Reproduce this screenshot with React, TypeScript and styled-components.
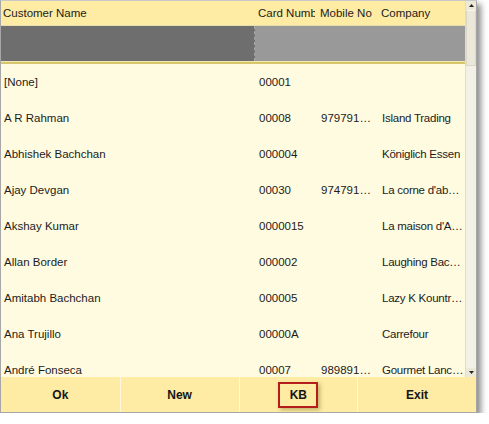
import React from "react";
import styled, { createGlobalStyle } from "styled-components";

const GlobalStyle = createGlobalStyle`
  html, body {
    margin: 0;
    padding: 0;
    background: #ffffff;
  }
  body {
    font-family: "Liberation Sans", Arial, sans-serif;
  }
`;

const Window = styled.div`
  width: 477px;
  height: 413px;
  border: 1px solid #a7a7a7;
  border-top-color: #c8c8c8;
  box-shadow: 4px 4px 6px rgba(0, 0, 0, 0.45);
  display: flex;
  flex-direction: column;
  box-sizing: border-box;
  overflow: hidden;
  font-family: "Liberation Sans", Arial, sans-serif;
  font-size: 11.5px;
  color: #1c1c1c;
  background: #fffbe0;
`;

const Main = styled.div`
  flex: 1;
  display: flex;
  min-height: 0;
`;

const Grid = styled.div`
  flex: 1;
  display: flex;
  flex-direction: column;
  min-width: 0;
  overflow: hidden;
`;

const COLS = "255px 62px 61px 1fr";

const HeaderRow = styled.div`
  display: grid;
  grid-template-columns: ${COLS};
  height: 24px;
  background: #feeba4;
  align-items: center;
  flex-shrink: 0;
  border-bottom: 1px solid #e6dcb0;
`;

const HeaderCell = styled.div`
  padding-left: 2px;
  margin-right: 3px;
  white-space: nowrap;
  overflow: hidden;
`;

const FilterRow = styled.div`
  display: grid;
  grid-template-columns: 254px 1fr;
  height: 35px;
  flex-shrink: 0;
`;

const FilterCell = styled.div<{ $dark?: boolean }>`
  background: ${(p) => (p.$dark ? "#6e6e6e" : "#999999")};
  border-right: ${(p) => (p.$dark ? "1px dashed #a8a8a8" : "none")};
`;

const Divider = styled.div`
  height: 2px;
  flex-shrink: 0;
  background: #d7c56a;
  border-top: 1px solid #f1e7b4;
`;

const Rows = styled.div`
  flex: 1;
  overflow: hidden;
`;

const Row = styled.div`
  display: grid;
  grid-template-columns: ${COLS};
  height: 36px;
  align-items: center;
`;

const Cell = styled.div<{ $tight?: boolean; $narrow?: boolean }>`
  padding-left: 3px;
  padding-right: ${(p) => (p.$tight ? "6px" : "0")};
  letter-spacing: ${(p) => (p.$narrow ? "-0.25px" : "normal")};
  white-space: nowrap;
  overflow: hidden;
  text-overflow: ellipsis;
`;

const Scrollbar = styled.div`
  width: 10px;
  flex-shrink: 0;
  background: #f1efe3;
  border-left: 1px solid #e0ddcc;
  display: flex;
  flex-direction: column;
`;

const ArrowButton = styled.div`
  height: 9px;
  display: flex;
  align-items: center;
  justify-content: center;
  background: #ece9d8;
  flex-shrink: 0;
`;

const Thumb = styled.div`
  height: 56px;
  background: #ebe8d9;
  border: 1px solid #d9d6c6;
  border-top-color: #f8f7f0;
  box-sizing: border-box;
  flex-shrink: 0;
`;

const Track = styled.div`
  flex: 1;
  background: #f3f1e7;
`;

const ButtonBar = styled.div`
  height: 35px;
  display: grid;
  grid-template-columns: repeat(4, 1fr);
  flex-shrink: 0;
  background: #feeba4;
`;

const BarButton = styled.div`
  display: flex;
  align-items: center;
  justify-content: center;
  font-weight: bold;
  font-size: 12px;
  color: #151515;
  border-left: 1px solid #fff8dc;
  &:first-child {
    border-left: none;
  }
`;

const Highlight = styled.span`
  display: inline-flex;
  align-items: center;
  justify-content: center;
  width: 40px;
  height: 26px;
  box-sizing: border-box;
  border: 2px solid #b51d1d;
  box-shadow: 2px 2px 4px rgba(120, 110, 40, 0.45);
`;

type Customer = { name: string; card: string; mobile?: string; company?: string };

const customers: Customer[] = [
  { name: "[None]", card: "00001" },
  { name: "A R Rahman", card: "00008", mobile: "9797912345", company: "Island Trading" },
  { name: "Abhishek Bachchan", card: "000004", company: "Königlich Essen" },
  { name: "Ajay Devgan", card: "00030", mobile: "9747912345", company: "La corne d'abondance" },
  { name: "Akshay Kumar", card: "0000015", company: "La maison d'Asie" },
  { name: "Allan Border", card: "000002", company: "Laughing  Bacchus Wine Cellars" },
  { name: "Amitabh Bachchan", card: "000005", company: "Lazy K  Kountry Store" },
  { name: "Ana Trujillo", card: "00000A", company: "Carrefour" },
  { name: "André Fonseca", card: "00007", mobile: "9898912345", company: "Gourmet  Lanchonetes" },
];

const UpArrow = () => (
  <svg width="5" height="3" viewBox="0 0 5 3">
    <path d="M0 3 L2.5 0 L5 3 Z" fill="#222" />
  </svg>
);

const DownArrow = () => (
  <svg width="5" height="3" viewBox="0 0 5 3">
    <path d="M0 0 L2.5 3 L5 0 Z" fill="#222" />
  </svg>
);

export default function App() {
  return (
    <>
      <GlobalStyle />
      <Window>
        <Main>
          <Grid>
            <HeaderRow>
              <HeaderCell>Customer Name</HeaderCell>
              <HeaderCell>Card Number</HeaderCell>
              <HeaderCell>Mobile No</HeaderCell>
              <HeaderCell>Company</HeaderCell>
            </HeaderRow>
            <FilterRow>
              <FilterCell $dark />
              <FilterCell />
            </FilterRow>
            <Divider />
            <Rows>
              {customers.map((c) => (
                <Row key={c.name}>
                  <Cell>{c.name}</Cell>
                  <Cell>{c.card}</Cell>
                  <Cell $tight>{c.mobile ?? ""}</Cell>
                  <Cell $narrow>{c.company ?? ""}</Cell>
                </Row>
              ))}
            </Rows>
          </Grid>
          <Scrollbar>
            <ArrowButton>
              <UpArrow />
            </ArrowButton>
            <Thumb />
            <Track />
            <ArrowButton>
              <DownArrow />
            </ArrowButton>
          </Scrollbar>
        </Main>
        <ButtonBar>
          <BarButton>Ok</BarButton>
          <BarButton>New</BarButton>
          <BarButton>
            <Highlight>KB</Highlight>
          </BarButton>
          <BarButton>Exit</BarButton>
        </ButtonBar>
      </Window>
    </>
  );
}
